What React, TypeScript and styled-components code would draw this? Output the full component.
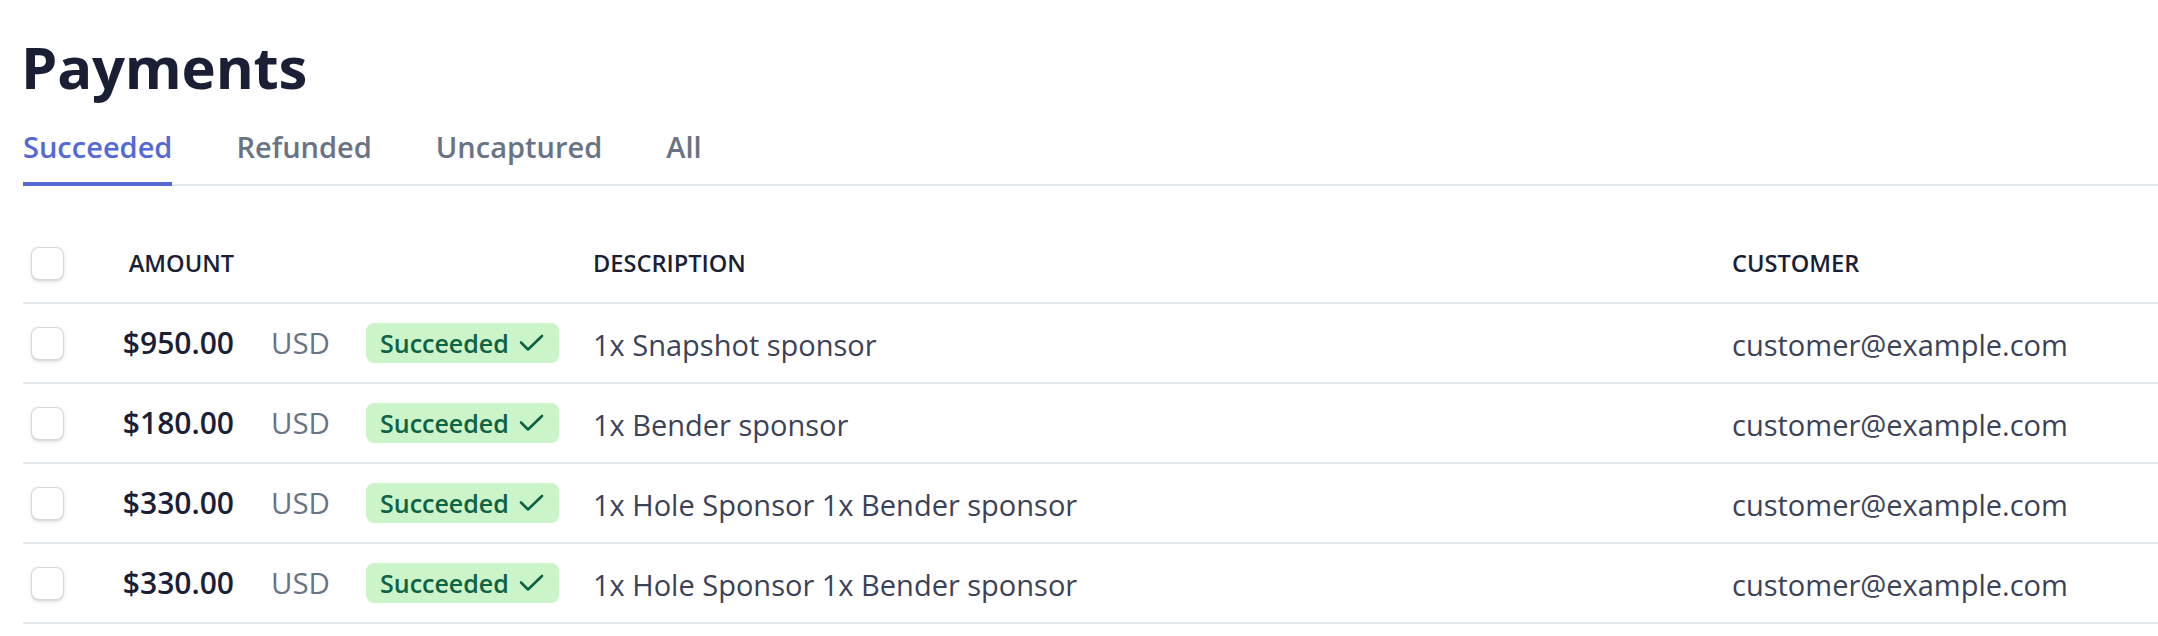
import React, { FC } from "react"
import styled, { createGlobalStyle } from "styled-components"

type Payment = {
	amount: string
	currency: string
	description: string
	customer: string
}

const payments: Payment[] = [
	{ amount: "$950.00", currency: "USD", description: "1x Snapshot sponsor", customer: "customer@example.com" },
	{ amount: "$180.00", currency: "USD", description: "1x Bender sponsor", customer: "customer@example.com" },
	{ amount: "$330.00", currency: "USD", description: "1x Hole Sponsor 1x Bender sponsor", customer: "customer@example.com" },
	{ amount: "$330.00", currency: "USD", description: "1x Hole Sponsor 1x Bender sponsor", customer: "customer@example.com" },
]

const tabs = ["Succeeded", "Refunded", "Uncaptured", "All"]

const CheckIcon: FC = () => (
	<svg width="25" height="18" viewBox="0 0 25 18" fill="none">
		<path d="M2 8.5 L9 15.5 L23 2" stroke="currentColor" strokeWidth="2.6" strokeLinecap="round" strokeLinejoin="round" />
	</svg>
)

const App: FC = () => {
	return (
		<>
			<GlobalStyle />
			<Page>
				<Title>Payments</Title>
				<Tabs>
					{tabs.map((tab, i) => (
						<Tab key={tab} active={i === 0}>
							{tab}
						</Tab>
					))}
				</Tabs>
				<Table>
					<HeaderRow>
						<Cell>
							<Checkbox />
						</Cell>
						<HeadLabel align="right">Amount</HeadLabel>
						<Cell />
						<Cell />
						<HeadLabel>Description</HeadLabel>
						<HeadLabel>Customer</HeadLabel>
					</HeaderRow>
					{payments.map((p, i) => (
						<Row key={i}>
							<Cell>
								<Checkbox />
							</Cell>
							<Amount>{p.amount}</Amount>
							<Currency>{p.currency}</Currency>
							<Cell>
								<Badge>
									Succeeded
									<CheckIcon />
								</Badge>
							</Cell>
							<TextCell>{p.description}</TextCell>
							<TextCell>{p.customer}</TextCell>
						</Row>
					))}
				</Table>
			</Page>
		</>
	)
}

export default App

const GlobalStyle = createGlobalStyle`
	html, body {
		margin: 0;
		padding: 0;
		background: #ffffff;
	}

	body {
		font-family: "Open Sans", "Noto Sans", Arial, sans-serif;
		color: #3c4257;
	}

	* {
		box-sizing: border-box;
	}
`

const Page = styled.div`
	padding: 38px 0 0 23px;
`

const Title = styled.h1`
	margin: 0 0 0 -2px;

	color: #1a1f36;
	font-size: 58px;
	font-weight: 700;
	line-height: 58px;
	letter-spacing: -0.2px;
`

const Tabs = styled.div`
	margin-top: 30px;

	display: flex;
	gap: 64px;

	border-bottom: 2px solid #e3e8ee;
`

const Tab = styled.div<{ active?: boolean }>`
	margin-bottom: -2px;
	padding-bottom: 14px;

	color: ${(p) => (p.active ? "#5469d4" : "#697386")};
	font-size: 29px;
	font-weight: 600;
	line-height: 42px;

	border-bottom: 4px solid ${(p) => (p.active ? "#5469d4" : "transparent")};
`

const Table = styled.div`
	margin-top: 38px;
`

const columns = "72px 139px 132px 227px 1139px 1fr"

const HeaderRow = styled.div`
	height: 80px;

	display: grid;
	grid-template-columns: ${columns};
	align-items: center;

	border-bottom: 2px solid #e3e8ee;
`

const Row = styled.div`
	height: 80px;

	display: grid;
	grid-template-columns: ${columns};
	align-items: center;

	border-bottom: 2px solid #e3e8ee;
`

const Cell = styled.div`
	display: flex;
	align-items: center;
`

const HeadLabel = styled.div<{ align?: "left" | "right" }>`
	color: #1a1f36;
	font-size: 23.6px;
	font-weight: 600;
	line-height: 34px;
	text-align: ${(p) => p.align || "left"};
	text-transform: uppercase;
`

const Checkbox = styled.span`
	width: 33px;
	height: 33px;

	margin-left: 8px;

	background: #ffffff;
	border: 1px solid rgba(60, 66, 87, 0.2);
	border-radius: 8px;
	box-shadow: 0 2px 4px rgba(60, 66, 87, 0.14), 0 1px 1px rgba(0, 0, 0, 0.08);
`

const Amount = styled.div`
	color: #1a1f36;
	font-size: 30px;
	font-weight: 600;
	line-height: 42px;
	text-align: right;
`

const Currency = styled.div`
	padding-left: 37px;

	color: #697386;
	font-size: 29.4px;
	line-height: 42px;
`

const Badge = styled.span`
	height: 40px;

	padding: 0 15px 0 14px;

	display: inline-flex;
	align-items: center;
	gap: 10px;

	color: #0e6245;
	font-size: 25px;
	font-weight: 600;

	background: #cbf4c9;
	border-radius: 8px;
`

const TextCell = styled.div`
	padding-top: 3px;

	color: #3c4257;
	font-size: 29px;
	line-height: 42px;
	white-space: nowrap;
`
